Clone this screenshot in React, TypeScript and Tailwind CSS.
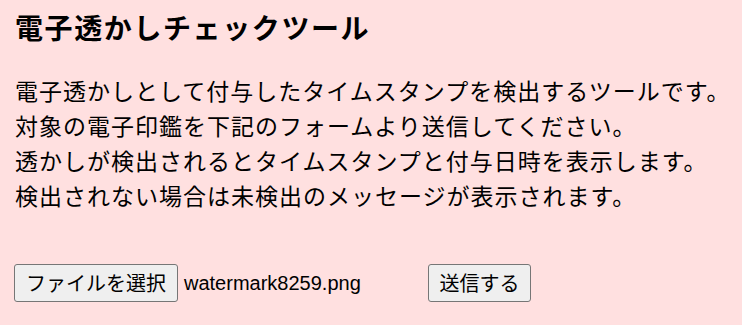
export default function App() {
  const jp = { fontFamily: '"Noto Sans CJK JP", "Noto Sans", sans-serif' };
  return (
    <div className="min-h-[325px] w-full overflow-hidden bg-[#ffe0e0] px-[15px] pt-[9px] text-black" style={jp}>
      <h1 className="whitespace-nowrap text-[28px] font-bold leading-[36px] tracking-[1.6px]">電子透かしチェックツール</h1>
      <p className="mt-[28px] whitespace-nowrap text-[23px] leading-[35px] tracking-[1px]">
        電子透かしとして付与したタイムスタンプを検出するツールです。
        <br />
        対象の電子印鑑を下記のフォームより送信してください。
        <br />
        透かしが検出されるとタイムスタンプと付与日時を表示します。
        <br />
        検出されない場合は未検出のメッセージが表示されます。
      </p>
      <form className="mt-[51px] flex items-center" onSubmit={(e) => e.preventDefault()}>
        <div className="flex w-[413px] items-center">
          <button
            type="button"
            className="ml-[-1px] flex h-[38px] w-[164px] items-center justify-center rounded-[3px] border border-[#767676] bg-[#efefef] text-[20px] leading-none text-black"
          >
            ファイルを選択
          </button>
          <span
            className="ml-[6px] text-[20px] leading-none text-black"
            style={{ fontFamily: '"Liberation Sans", Arial, sans-serif' }}
          >
            watermark8259.png
          </span>
        </div>
        <button
          type="submit"
          className="flex h-[38px] w-[103px] items-center justify-center rounded-[3px] border border-[#767676] bg-[#efefef] text-[20px] leading-none text-black"
        >
          送信する
        </button>
      </form>
    </div>
  );
}
